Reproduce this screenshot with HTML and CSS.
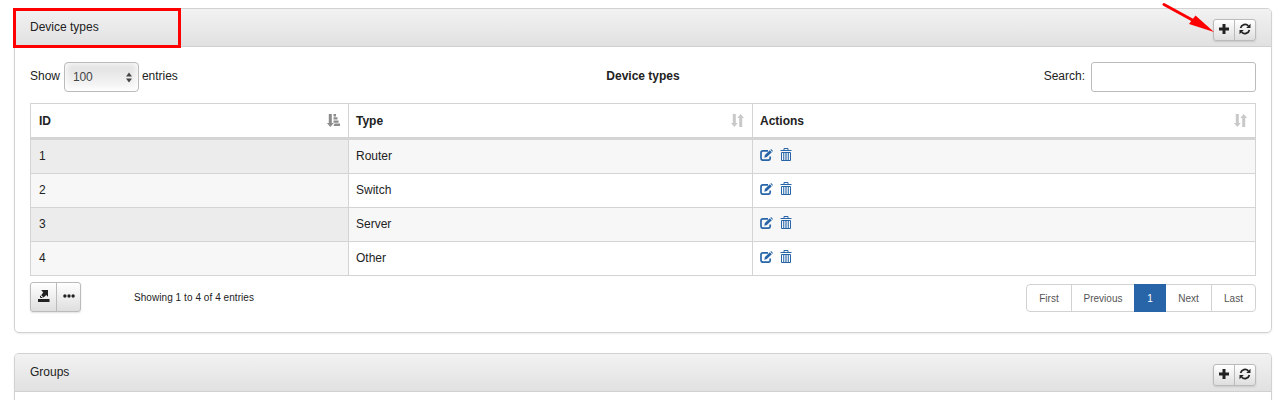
FILE: index.html
```
<!DOCTYPE html>
<html lang="en">
<head>
<meta charset="utf-8">
<title>Device types</title>
<link rel="stylesheet" href="styles.css">
</head>
<body>
<svg class="defs" width="0" height="0" aria-hidden="true">
  <symbol id="plus" viewBox="0 0 10 10"><path d="M3.5 0h3v3.5H10v3H6.5V10h-3V6.5H0v-3h3.5z"/></symbol>
  <symbol id="refresh" viewBox="0 0 12 12"><path d="M1.6 5A4.5 4.5 0 0 1 9.4 3M10.4 7A4.5 4.5 0 0 1 2.6 9" fill="none" stroke="currentColor" stroke-width="1.7"/><path d="M11.5.7V5H7.2zM.5 11.3V7h4.3z"/></symbol>
  <symbol id="sort" viewBox="0 0 13 13"><path d="M1.8 0h3v9h2L3.3 13 0 9h1.8zM8.2 13h3V4H13L9.7 0 6.3 4h1.9z"/></symbol>
  <symbol id="sort-asc" viewBox="0 0 13 13"><path d="M1.8 0h3v9h2L3.3 13 0 9h1.8zM6.5 0H9v2.4H6.5zM6.5 3.3h4v2.3h-4zM6.5 6.5h5v2.3h-5zM7.5 9.6H13V12H6.5z"/></symbol>
  <symbol id="edit" viewBox="0 0 13 12"><path d="M8 1.8H3Q1 1.8 1 3.8v5.4Q1 11.2 3 11.2h5.2q2 0 2-2V7.5" fill="none" stroke="currentColor" stroke-width="1.7"/><path d="M4.3 8.7l.6-2.6 4.9-4.8 2 2-4.9 4.8zM10.4.7l.7-.7 2 2-.7.7z"/></symbol>
  <symbol id="trash" viewBox="0 0 12 13"><path d="M.5 2.5h11M4 2.4V.5h4v1.9M1.5 4.5v8h9v-8z" fill="none" stroke="currentColor" stroke-width="1"/><path d="M3.5 5v7M5.2 5v7M6.8 5v7M8.5 5v7" stroke="currentColor" stroke-width=".8"/></symbol>
  <symbol id="export" viewBox="0 0 12 13"><path d="M3.2 0H10v6.8L8.2 5 5.6 7.6 3.2 5.2 5.2 2.6zM0 9h11.5v3H0z"/><path d="M2.5 5.8v1.7h1.8" fill="none" stroke="currentColor"/></symbol>
</svg>

<section class="panel">
  <header class="panel-head">
    <span class="title">Device types</span>
    <div class="btn-group">
      <button class="btn"><svg class="i-plus"><use href="#plus"/></svg></button>
      <button class="btn"><svg class="i-refresh"><use href="#refresh"/></svg></button>
    </div>
    <div class="highlight"></div>
    <svg class="arrow" width="60" height="34" viewBox="0 0 60 34"><path d="M9 4.5 41 22" stroke="#f00" stroke-width="3" stroke-linecap="round"/><path d="M40.5 15.5 59 32 34 24z" fill="#f00"/></svg>
  </header>
  <div class="panel-body">
    <div class="toolbar">
      <div class="length">Show <span class="select">100<svg class="caret" viewBox="0 0 6 10"><path d="M3 0l3 4H0zM3 10l3-4H0z"/></svg></span> entries</div>
      <strong>Device types</strong>
      <label class="search">Search:<input type="text"></label>
    </div>
    <table>
      <thead>
        <tr>
          <th class="c-id"><div>ID<svg class="sorted"><use href="#sort-asc"/></svg></div></th>
          <th class="c-type"><div>Type<svg><use href="#sort"/></svg></div></th>
          <th><div>Actions<svg><use href="#sort"/></svg></div></th>
        </tr>
      </thead>
      <tbody>
        <tr><td>1</td><td>Router</td><td><div class="actions"><svg class="i-edit"><use href="#edit"/></svg><svg class="i-trash"><use href="#trash"/></svg></div></td></tr>
        <tr><td>2</td><td>Switch</td><td><div class="actions"><svg class="i-edit"><use href="#edit"/></svg><svg class="i-trash"><use href="#trash"/></svg></div></td></tr>
        <tr><td>3</td><td>Server</td><td><div class="actions"><svg class="i-edit"><use href="#edit"/></svg><svg class="i-trash"><use href="#trash"/></svg></div></td></tr>
        <tr><td>4</td><td>Other</td><td><div class="actions"><svg class="i-edit"><use href="#edit"/></svg><svg class="i-trash"><use href="#trash"/></svg></div></td></tr>
      </tbody>
    </table>
    <div class="footer">
      <div class="btn-group large">
        <button class="btn"><svg class="i-export"><use href="#export"/></svg></button>
        <button class="btn"><svg class="i-dots" viewBox="0 0 12 4"><circle cx="1.9" cy="2" r="1.7"/><circle cx="6" cy="2" r="1.7"/><circle cx="10.1" cy="2" r="1.7"/></svg></button>
      </div>
      <span class="info">Showing 1 to 4 of 4 entries</span>
      <nav class="pages"><a class="p-first">First</a><a class="p-prev">Previous</a><a class="current">1</a><a class="p-next">Next</a><a class="p-last">Last</a></nav>
    </div>
  </div>
</section>

<section class="panel cut">
  <header class="panel-head">
    <span class="title">Groups</span>
    <div class="btn-group">
      <button class="btn"><svg class="i-plus"><use href="#plus"/></svg></button>
      <button class="btn"><svg class="i-refresh"><use href="#refresh"/></svg></button>
    </div>
  </header>
</section>
</body>
</html>
```
FILE: styles.css
```
* { box-sizing: border-box; }
body {
  margin: 0;
  padding: 8px 14px 0;
  height: 400px;
  overflow: hidden;
  background: #fff;
  color: #222;
  font: 12px/18px "Liberation Sans", Arial, sans-serif;
}
svg { display: block; fill: currentColor; }
.defs { position: absolute; }
.panel {
  height: 325px;
  margin-bottom: 20px;
  border: 1px solid #d2d2d2;
  border-radius: 5px;
  box-shadow: 0 1px 2px rgba(0, 0, 0, .08);
}
.cut {
  height: 47px;
  margin-bottom: 0;
  border-bottom: 0;
  border-radius: 5px 5px 0 0;
}
.panel-head {
  position: relative;
  display: flex;
  justify-content: space-between;
  height: 38px;
  padding: 9px 15px 0;
  border-bottom: 1px solid #d0d0d0;
  border-radius: 4px 4px 0 0;
  background: linear-gradient(#f2f2f2, #e1e1e1);
}
.highlight {
  position: absolute;
  left: -2px;
  top: -1px;
  width: 168px;
  height: 40px;
  border: 3px solid #f00;
}
.arrow { position: absolute; left: 1140px; top: -9px; }
.btn-group {
  display: flex;
  width: 43px;
  height: 22px;
  margin-top: 1px;
  border: 1px solid #bbb;
  border-radius: 3px;
  background: linear-gradient(#fff, #dedede);
  box-shadow: 0 1px 2px rgba(0, 0, 0, .12);
}
.btn {
  display: flex;
  flex: 1;
  align-items: center;
  justify-content: center;
  padding: 0 0 2px;
  border: 0;
  background: none;
  color: #222;
}
.btn + .btn { border-left: 1px solid #bbb; }
.i-plus { width: 10px; height: 10px; }
.i-refresh { width: 12px; height: 12px; }
.panel-body { padding: 15px; }
.toolbar {
  display: grid;
  grid-template-columns: 1fr auto 1fr;
  height: 41px;
  align-items: start;
}
.toolbar strong { padding-top: 5px; }
.length { display: flex; gap: 4px; width: 150px; line-height: 28px; letter-spacing: -.02px; }
.select {
  display: flex;
  align-items: center;
  justify-content: space-between;
  width: 75px;
  height: 30px;
  margin-right: -1px;
  padding: 0 6px 0 8px;
  border: 1px solid #bbb;
  border-radius: 4px;
  background: linear-gradient(#dedede, #fbfbfb);
  box-shadow: inset 0 0 6px 1px #fff;
  color: #444;
  letter-spacing: -.2px;
}
.caret { width: 6px; height: 11px; }
.search { display: flex; justify-content: flex-end; gap: 6px; line-height: 28px; }
.search input {
  width: 165px;
  height: 30px;
  margin: 0;
  border: 1px solid #bbb;
  border-radius: 3px;
  background: #fff;
}
table {
  width: 1226px;
  table-layout: fixed;
  border-collapse: separate;
  border-spacing: 0;
  border: solid #d4d4d4;
  border-width: 1px 0 0 1px;
}
th, td { padding: 0 8px; border: solid #d4d4d4; border-width: 0 1px 1px 0; text-align: left; }
th { height: 36px; border-bottom-width: 3px; }
th + th, td + td { padding-left: 7px; }
th div { display: flex; justify-content: space-between; align-items: center; }
th svg { width: 13px; height: 13px; color: #c9c9c9; }
th svg.sorted { color: #8c8c8c; }
.c-id { width: 318px; }
.c-type { width: 404px; }
td { height: 34px; padding-bottom: 2px; }
tbody tr:nth-child(odd) td { background: #f7f7f7; }
tbody tr:nth-child(even) td:first-child { background: #f7f7f7; }
tbody tr:nth-child(odd) td:first-child { background: #ececec; }
.actions { display: flex; gap: 7px; padding-bottom: 3px; color: #2765a8; }
.i-edit { width: 13px; height: 12px; margin-top: 1px; }
.i-trash { width: 12px; height: 13px; }
.footer { display: flex; align-items: flex-start; padding-top: 6px; font-size: 10px; }
.large { width: 51px; height: 30px; margin-top: 0; }
.large .btn:first-child { flex: none; width: 25px; }
.i-export { width: 12px; height: 13px; }
.i-dots { width: 12px; height: 4px; margin-bottom: 1px; }
.info { padding: 7px 0 0 53px; letter-spacing: .06px; }
.pages {
  display: flex;
  width: 230px;
  height: 28px;
  margin: 2px 0 0 auto;
  border: 1px solid #d2d2d2;
  border-radius: 4px;
  color: #555;
  line-height: 28px;
  text-align: center;
}
.p-first { width: 45px; border-right: 1px solid #d2d2d2; }
.p-prev { width: 62px; }
.current { width: 32px; margin: -1px 0; background: #2765a8; color: #fff; line-height: 30px; }
.p-next { width: 46px; border-right: 1px solid #d2d2d2; }
.p-last { flex: 1; }
```
